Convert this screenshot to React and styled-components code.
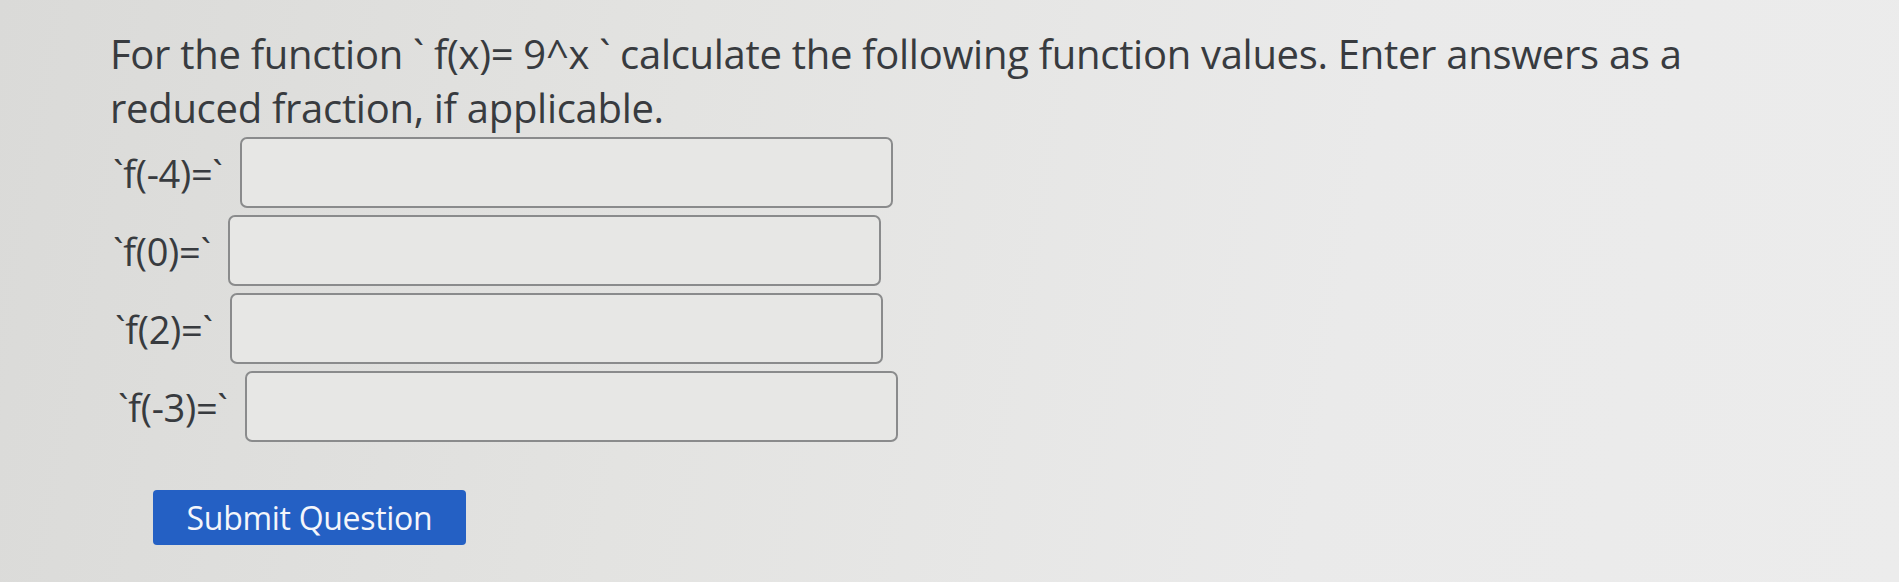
import styled, { createGlobalStyle } from "styled-components";

const Global = createGlobalStyle`
  html, body {
    margin: 0;
    padding: 0;
  }
  body {
    width: 1899px;
    height: 582px;
    overflow: hidden;
    background: linear-gradient(100deg, #dadad8 0%, #e3e3e1 35%, #eaeaea 70%, #ececec 100%);
    font-family: "Open Sans", "Liberation Sans", sans-serif;
    color: #383b3f;
  }
`;

const Page = styled.div`
  padding: 27px 0 0 110px;
  width: 1760px;
`;

const Prompt = styled.p`
  margin: 0;
  font-size: 40px;
  line-height: 54px;
  letter-spacing: -0.3px;
  white-space: nowrap;
`;

const Rows = styled.div`
  display: flex;
  flex-direction: column;
  gap: 7px;
  margin-top: 2px;
`;

const Row = styled.div`
  display: flex;
  align-items: center;
  gap: 17px;
  padding-left: ${(p) => p.indent}px;
`;

const Label = styled.label`
  font-size: 38px;
  letter-spacing: -0.3px;
  white-space: pre;
`;

const Box = styled.input`
  box-sizing: border-box;
  width: 653px;
  height: 71px;
  border: 2px solid #8a8b8c;
  border-radius: 7px;
  background: #e7e7e5;
  font-family: inherit;
  font-size: 26px;
  padding: 0 12px;
  outline: none;
`;

const Submit = styled.button`
  margin: 48px 0 0 43px;
  width: 313px;
  height: 55px;
  border: none;
  border-radius: 4px;
  background: #2460c4;
  color: #f4f6fb;
  font-family: "Open Sans", "Liberation Sans", sans-serif;
  font-size: 32px;
  letter-spacing: -0.3px;
  cursor: pointer;
`;

const parts = [
  { label: "`f(-4)=`", indent: 3 },
  { label: "`f(0)=`", indent: 3 },
  { label: "`f(2)=`", indent: 5 },
  { label: "`f(-3)=`", indent: 8 },
];

export default function App() {
  return (
    <>
      <Global />
      <Page>
        <Prompt>
          For the function ` f(x)= 9^x ` calculate the following function values. Enter answers as a
          <br />
          reduced fraction, if applicable.
        </Prompt>
        <Rows>
          {parts.map((p) => (
            <Row key={p.label} indent={p.indent}>
              <Label>{p.label}</Label>
              <Box type="text" />
            </Row>
          ))}
        </Rows>
        <Submit>Submit Question</Submit>
      </Page>
    </>
  );
}
